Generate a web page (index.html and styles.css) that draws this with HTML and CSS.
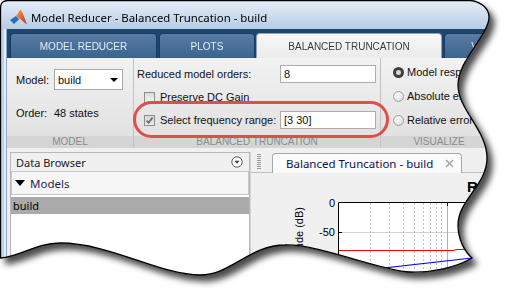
FILE: index.html
```html
<!DOCTYPE html>
<html lang="en">
<head>
  <meta charset="UTF-8">
  <title>Model Reducer - Balanced Truncation - build</title>
  <link rel="stylesheet" href="styles.css">
</head>
<body>

  <div class="shot">
    <div class="window">

      <div class="titlebar">
        <svg class="logo" width="17" height="17" viewBox="0 0 17 17">
          <defs>
            <linearGradient id="peak" x1="0" y1="0" x2="1" y2="1">
              <stop offset="0" stop-color="#f9a03f"/>
              <stop offset="1" stop-color="#c9301c"/>
            </linearGradient>
          </defs>
          <polygon points="0,11 6,7 10,9.5 4,15" fill="#2e6db4"/>
          <polygon points="6,7 10.5,0.5 13.5,6 17,15.5 13,12.5 10,9.5" fill="url(#peak)"/>
          <polygon points="6,7 10,9.5 8.5,10.5" fill="#7fb2e0"/>
        </svg>
        <span>Model Reducer - Balanced Truncation - build</span>
      </div>

      <div class="main">
        <div class="tabs">
          <div class="tab t1">MODEL REDUCER</div>
          <div class="tab t2">PLOTS</div>
          <div class="tab t3 active">BALANCED TRUNCATION</div>
          <div class="tab t4">VIEW</div>
        </div>

        <div class="toolstrip">
          <div class="section sec-model">
            <div class="sec-body">
              <div class="row">
                <span class="lbl">Model:</span>
                <div class="combo">build<span class="arrow"></span></div>
              </div>
              <div class="row order">
                <span class="lbl">Order:</span>
                <span>48 states</span>
              </div>
            </div>
            <div class="sec-label">MODEL</div>
          </div>

          <div class="section sec-bt">
            <div class="sec-body">
              <div class="field-row">
                <span>Reduced model orders:</span>
                <div class="input">8</div>
              </div>
              <div class="field-row">
                <span class="box"></span>
                <span>Preserve DC Gain</span>
              </div>
              <div class="field-row">
                <span class="box checked">
                  <svg width="9" height="9" viewBox="0 0 9 9"><path d="M1.5 4.5 L3.5 6.8 L7.6 1.6" fill="none" stroke="#6f6f6f" stroke-width="1.8"/></svg>
                </span>
                <span>Select frequency range:</span>
                <div class="input">[3 30]</div>
              </div>
            </div>
            <div class="sec-label">BALANCED TRUNCATION</div>
          </div>

          <div class="section sec-vis">
            <div class="sec-body">
              <div class="radio-row"><span class="radio on"></span>Model response</div>
              <div class="radio-row"><span class="radio"></span>Absolute error</div>
              <div class="radio-row"><span class="radio"></span>Relative error</div>
            </div>
            <div class="sec-label">VISUALIZE</div>
          </div>
        </div>

        <div class="workspace">
          <div class="browser">
            <div class="browser-head">
              <span>Data Browser</span>
              <svg width="12" height="12" viewBox="0 0 12 12">
                <circle cx="6" cy="6" r="5.2" fill="#fff" stroke="#5a5a5a"/>
                <polygon points="3.4,4.8 8.6,4.8 6,7.8" fill="#3a3a3a"/>
              </svg>
            </div>
            <div class="group"><span class="tri"></span>Models</div>
            <div class="item">build</div>
          </div>

          <div class="docs">
            <div class="doc-bar">
              <span class="grip"></span>
              <div class="doc-tab">
                <span>Balanced Truncation - build</span>
                <svg width="9" height="9" viewBox="0 0 9 9">
                  <path d="M1 1 L8 8 M8 1 L1 8" stroke="#a8a8a8" stroke-width="1.6"/>
                </svg>
              </div>
            </div>
            <div class="figure">
              <svg class="plot" width="254" height="118" viewBox="0 0 254 118">
                <text x="216" y="19" class="plot-title">R</text>
                <rect x="87" y="29" width="180" height="100" fill="#fff"/>
                <line x1="87" y1="59.5" x2="267" y2="59.5" stroke="#d2d2d2"/>
                <g stroke="#c4c4c4" stroke-dasharray="2 2">
                  <line x1="119.5" y1="30" x2="119.5" y2="129"/>
                  <line x1="138.5" y1="30" x2="138.5" y2="129"/>
                  <line x1="152.5" y1="30" x2="152.5" y2="129"/>
                  <line x1="163.5" y1="30" x2="163.5" y2="129"/>
                  <line x1="172.5" y1="30" x2="172.5" y2="129"/>
                  <line x1="179.5" y1="30" x2="179.5" y2="129"/>
                  <line x1="185.5" y1="30" x2="185.5" y2="129"/>
                  <line x1="190.5" y1="30" x2="190.5" y2="129"/>
                  <line x1="229.5" y1="30" x2="229.5" y2="129"/>
                </g>
                <line x1="196.5" y1="30" x2="196.5" y2="129" stroke="#b0b0b0"/>
                <line x1="196.5" y1="29" x2="196.5" y2="33" stroke="#000"/>
                <path d="M87.5 129 V29.5 H267" fill="none" stroke="#000"/>
                <line x1="87" y1="59.5" x2="91" y2="59.5" stroke="#000"/>
                <text x="84" y="34" class="tick">0</text>
                <text x="84" y="63" class="tick">-50</text>
                <text class="ylabel" transform="translate(52 34) rotate(-90)">Magnitude (dB)</text>
                <path d="M88 77.5 H202 L206 76.5 H267" fill="none" stroke="#ff0000" stroke-width="1.2"/>
                <line x1="88" y1="100" x2="230" y2="84" stroke="#0000ff" stroke-width="1.2"/>
              </svg>
            </div>
          </div>
        </div>
      </div>

      <div class="annotation"></div>
    </div>

    <svg class="edge" width="505" height="291" viewBox="0 0 505 291">
      <path d="M0.5 258 L0.5 8 Q0.5 0.5 8 0.5 L470 0.5 C480 1 489 8 489 17 C489 35 458 60 458 85 C458 110 487 130 487 158 C487 185 458 200 458 225 C458 240 465 252 472 258 C455 268 430 273 410 272 C380 271 320 244 285 245 C250 245 231 275 200 275 C160 275 110 243 60 243 C35 243 20 257 0.5 258 Z" fill="none" stroke="#000" stroke-width="1.3"/>
    </svg>
  </div>

</body>
</html>
```

FILE: styles.css
```css
body {
  margin: 0;
  background-color: #fff;
}

.shot {
  position: relative;
  width: 505px;
  height: 291px;
  filter: drop-shadow(5px 6px 3px rgba(0, 0, 0, 0.7));
}

.window {
  position: relative;
  width: 505px;
  height: 291px;
  display: flex;
  flex-direction: column;
  background-color: #bed3ea;
  font-family: "Liberation Sans", Arial, sans-serif;
  font-size: 11px;
  color: #111;
  clip-path: path("M0.5 258 L0.5 8 Q0.5 0.5 8 0.5 L470 0.5 C480 1 489 8 489 17 C489 35 458 60 458 85 C458 110 487 130 487 158 C487 185 458 200 458 225 C458 240 465 252 472 258 C455 268 430 273 410 272 C380 271 320 244 285 245 C250 245 231 275 200 275 C160 275 110 243 60 243 C35 243 20 257 0.5 258 Z");
}

.edge {
  position: absolute;
  left: 0;
  top: 0;
}

/* title bar */
.titlebar {
  height: 29px;
  flex: none;
  box-sizing: border-box;
  padding: 6px 0 0 10px;
  display: flex;
  align-items: center;
  gap: 4px;
  background: linear-gradient(#e7eff8, #b6cce6);
  font-family: "Noto Sans", sans-serif;
  font-size: 11.4px;
  color: #000;
}

.main {
  flex: 1;
  min-height: 0;
  margin-left: 7px;
  display: flex;
  flex-direction: column;
  background-color: #f0f0f0;
  box-shadow: -1px 0 0 #8ea9c9, -3px 0 0 #e3edf8;
}

/* ribbon tabs */
.tabs {
  height: 29px;
  flex: none;
  display: flex;
  align-items: flex-end;
  padding-left: 3px;
  background-color: #1f466f;
  overflow: hidden;
}

.tab {
  flex: none;
  height: 25px;
  box-sizing: border-box;
  display: flex;
  align-items: center;
  justify-content: center;
  font-size: 10px;
  color: #e6edf5;
  background: linear-gradient(#587ca3, #3a6490);
  border: 1px solid #163a60;
  border-bottom: none;
  border-radius: 4px 4px 0 0;
}

.t1 { width: 147px; margin-right: 2px; }
.t2 { width: 96px; margin-right: 1px; }
.t3 { width: 186px; margin-right: 2px; }
.t4 { width: 80px; }

.tab.active {
  background: linear-gradient(#f8f8f8, #ebebeb);
  border-color: #8fa3b8;
  color: #3a3a3a;
}

/* toolstrip */
.toolstrip {
  height: 90px;
  flex: none;
  display: flex;
  background: linear-gradient(#f2f2f2, #dfdfdf);
}

.section {
  flex: none;
  display: flex;
  flex-direction: column;
  border-right: 1px solid #c2c2c2;
}

.sec-body {
  flex: 1;
}

.sec-label {
  height: 12px;
  line-height: 12px;
  font-size: 10px;
  text-align: center;
  color: #8a8a8a;
  background-color: #d5d5d5;
}

.sec-model { width: 126px; }
.sec-bt { width: 246px; }
.sec-vis { width: 116px; }

.sec-model .sec-body {
  padding: 11px 0 0 9px;
}

.row {
  display: flex;
  align-items: center;
  height: 21px;
}

.row.order {
  height: 14px;
  margin-top: 16px;
}

.lbl {
  width: 38px;
}

.combo {
  width: 69px;
  height: 21px;
  box-sizing: border-box;
  border: 1px solid #a9a9a9;
  background-color: #fff;
  padding: 0 4px 0 3px;
  display: flex;
  align-items: center;
  justify-content: space-between;
}

.arrow {
  width: 0;
  height: 0;
  border-left: 4px solid transparent;
  border-right: 4px solid transparent;
  border-top: 4px solid #000;
}

.sec-bt .sec-body {
  padding: 7px 4px 0 3px;
  display: flex;
  flex-direction: column;
  gap: 5px;
}

.field-row {
  display: flex;
  align-items: center;
  height: 18px;
}

.input {
  margin-left: auto;
  width: 96px;
  height: 18px;
  box-sizing: border-box;
  border: 1px solid #acacac;
  background-color: #fff;
  padding-left: 3px;
  line-height: 16px;
}

.box {
  width: 11px;
  height: 11px;
  box-sizing: border-box;
  margin: 0 5px 0 7px;
  border: 1px solid #8e8e8e;
  background: linear-gradient(#dadada, #f7f7f7);
  display: flex;
  align-items: center;
  justify-content: center;
}

.box.checked {
  background: linear-gradient(#d6d6d6, #ececec);
}

.sec-vis .sec-body {
  padding: 5px 0 0 12px;
  display: flex;
  flex-direction: column;
  gap: 6px;
  white-space: nowrap;
}

.radio-row {
  display: flex;
  align-items: center;
  height: 18px;
}

.radio {
  width: 11px;
  height: 11px;
  box-sizing: border-box;
  margin-right: 3px;
  border-radius: 50%;
  border: 1px solid #a0a0a0;
  background: radial-gradient(circle at 40% 35%, #fdfdfd, #d4d4d4);
}

.radio.on {
  border: 3px solid #3f3f3f;
  background: #d8d8d8;
}

/* lower part */
.workspace {
  flex: 1;
  min-height: 0;
  display: flex;
  padding-top: 4px;
  background-color: #f0f0f0;
}

.browser {
  width: 240px;
  flex: none;
  box-sizing: border-box;
  margin-left: 3px;
  border: 1px solid #b8b8b8;
  background-color: #fff;
  display: flex;
  flex-direction: column;
  font-family: "Noto Sans", sans-serif;
  font-size: 11px;
}

.browser-head {
  height: 18px;
  flex: none;
  display: flex;
  align-items: center;
  justify-content: space-between;
  padding: 0 6px 0 5px;
  background-color: #f0f0f0;
  color: #222;
}

.group {
  height: 24px;
  flex: none;
  box-sizing: border-box;
  display: flex;
  align-items: center;
  padding-left: 3px;
  border: 1px solid #c8c8c8;
  background-color: #f6f6f6;
  color: #1d1d55;
  font-size: 11.5px;
}

.tri {
  width: 0;
  height: 0;
  margin-right: 5px;
  border-left: 5px solid transparent;
  border-right: 5px solid transparent;
  border-top: 6px solid #000;
}

.item {
  height: 17px;
  flex: none;
  margin-top: 2px;
  padding-left: 2px;
  display: flex;
  align-items: center;
  background-color: #aaaaaa;
  color: #000;
}

.docs {
  flex: 1;
  display: flex;
  flex-direction: column;
  border-left: 1px solid #d4d4d4;
}

.doc-bar {
  height: 20px;
  flex: none;
  display: flex;
  align-items: flex-end;
  padding-left: 6px;
}

.grip {
  width: 4px;
  height: 16px;
  margin-bottom: 2px;
  background: repeating-linear-gradient(#9a9a9a 0 1px, transparent 1px 2px);
}

.doc-tab {
  width: 190px;
  height: 20px;
  box-sizing: border-box;
  margin-left: 11px;
  margin-bottom: -1px;
  padding: 0 7px 0 13px;
  display: flex;
  align-items: center;
  justify-content: space-between;
  border: 1px solid #a8a8a8;
  border-bottom: none;
  border-radius: 4px 4px 0 0;
  background-color: #fbfbfb;
  font-family: "Noto Sans", sans-serif;
  font-size: 11.5px;
  color: #10104a;
  position: relative;
}

.figure {
  flex: 1;
  border-top: 1px solid #c0c0c0;
  background-color: #f0f0f0;
}

.plot {
  display: block;
}

.plot text {
  font-family: "Liberation Sans", Arial, sans-serif;
}

.plot-title {
  font-size: 15px;
  font-weight: bold;
}

.tick {
  font-size: 11px;
  text-anchor: end;
}

.ylabel {
  font-size: 11px;
  text-anchor: end;
}

/* red highlight drawn over the toolstrip */
.annotation {
  position: absolute;
  left: 133px;
  top: 101px;
  width: 256px;
  height: 37px;
  box-sizing: border-box;
  border: 3px solid #df4e4b;
  border-radius: 19px;
}
```
